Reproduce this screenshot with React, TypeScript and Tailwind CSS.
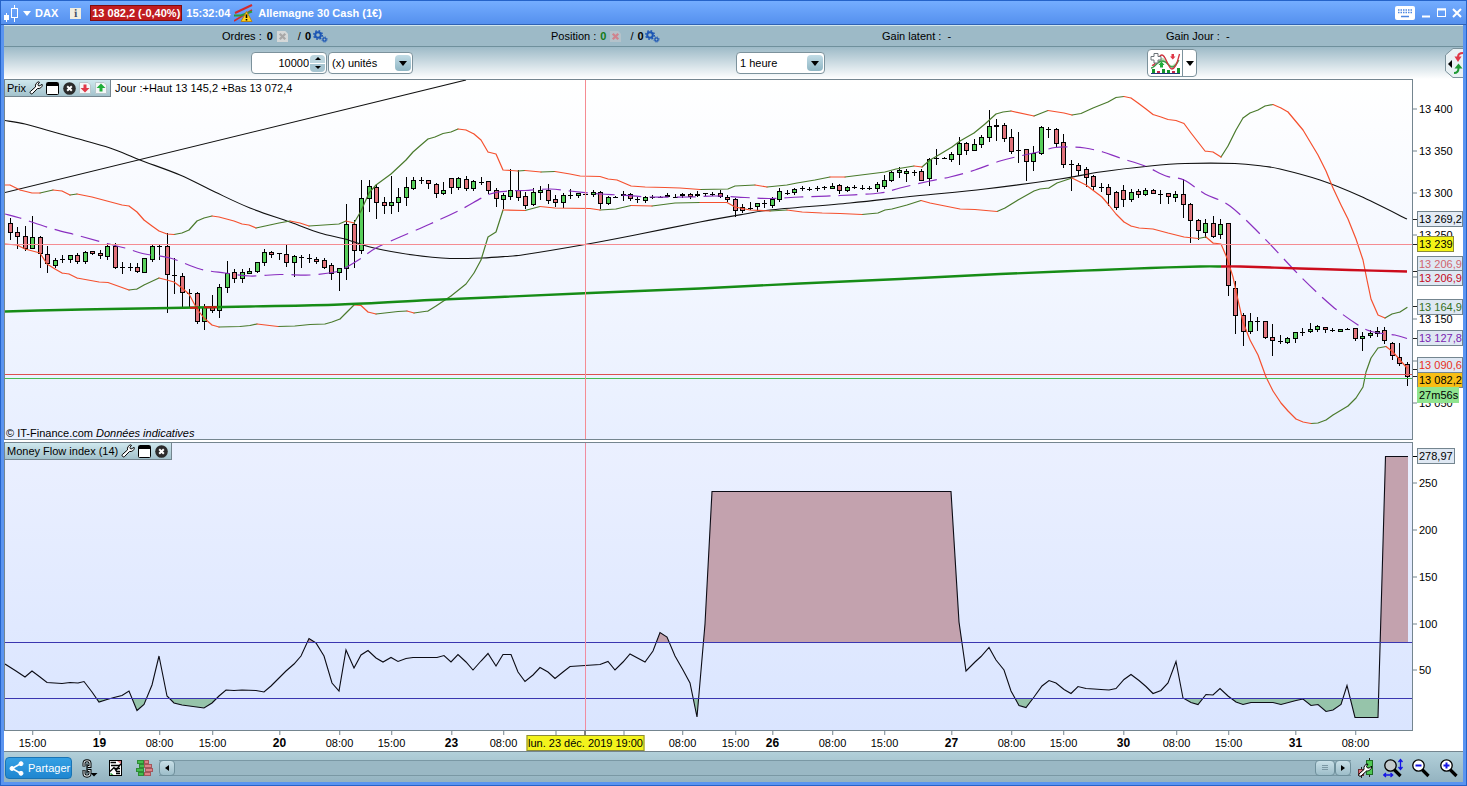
import React from "react";

type Point = [number, number];
type Candle = [number, number, number, number, number];

/* ---------- chart geometry ---------- */

const PRICE = { x: 5, y: 80, w: 1407, h: 359 };
const MFI = { x: 5, y: 443, w: 1407, h: 287 };
const priceToY = (p: number) => 109 + (13400 - p) * 0.84;
const mfiToY = (v: number) => 717 - v * 0.935;
const pct = (v: number) => `${v * 100}%`;
const priceTop = (y: number) => pct((y - 79) / 361);
const mfiTop = (y: number) => pct((y - 442) / 289);
const timeLeft = (x: number) => pct((x + 0.5 - 4) / 1409);

/* high, body top, body bottom, low, rising (1) or falling (0) */
const candles: Candle[] = [
  [218,223,232,239,0],[227,232,236,248,0],[226,236,248,250,0],[216,237,248,248,1],[236,237,253,267,0],[246,254,263,272,0],
  [258,260,265,267,1],[255,259,259,262,0],[255,255,259,262,1],[253,255,261,263,0],[251,252,261,263,1],[251,251,253,254,0],
  [250,253,255,258,0],[243,246,256,259,1],[243,246,267,268,0],[262,267,267,273,0],[263,267,267,270,0],[263,267,271,272,0],
  [258,258,272,272,1],[244,246,259,261,1],[245,246,246,259,0],[233,246,274,312,0],[258,275,275,293,0],[273,276,292,306,0],
  [289,293,293,307,0],[292,293,321,323,0],[304,307,321,329,1],[295,307,310,312,0],[284,287,310,317,1],[261,273,287,292,1],
  [269,272,278,282,0],[269,272,278,282,1],[268,271,273,273,1],[262,262,271,272,1],[249,252,262,265,1],[251,252,254,257,0],
  [253,253,253,259,0],[245,254,262,266,0],[255,256,262,276,1],[255,257,257,267,0],[254,258,258,262,0],[257,259,261,263,0],
  [258,260,267,268,0],[263,265,273,279,0],[268,268,272,290,1],[204,224,268,279,1],[220,224,250,267,0],[180,198,250,253,1],
  [180,186,198,211,1],[184,187,202,218,0],[197,202,205,213,0],[176,202,205,213,1],[188,197,202,211,1],[177,187,197,205,1],
  [177,180,188,189,1],[177,180,180,183,0],[180,180,183,188,0],[183,184,193,197,0],[182,190,193,194,1],[178,178,187,193,0],
  [177,178,187,189,1],[176,179,188,190,0],[180,181,188,190,1],[177,182,182,184,0],[181,181,190,193,0],[188,190,198,206,0],
  [193,195,199,208,1],[169,190,196,199,1],[170,190,197,200,0],[192,196,205,208,0],[188,192,204,205,1],[186,190,192,199,1],
  [184,190,200,203,0],[195,199,202,206,0],[193,195,202,207,1],[189,195,195,198,0],[193,193,195,197,1],[191,194,194,196,0],
  [190,192,194,196,1],[191,192,203,208,0],[196,197,203,204,1],[196,197,197,197,0],[191,194,195,200,1],[193,194,198,200,0],
  [197,199,199,202,0],[196,197,200,202,1],[195,197,197,198,0],[196,197,197,197,0],[193,195,196,196,0],[194,197,197,197,0],
  [193,194,195,197,0],[193,194,196,198,0],[191,194,195,196,0],[193,193,193,195,0],[192,194,194,195,0],[190,193,196,197,0],
  [195,197,199,201,0],[198,199,210,216,0],[204,207,210,212,0],[202,208,208,209,0],[203,203,206,210,1],[200,203,203,207,0],
  [197,199,205,207,1],[188,191,199,201,1],[190,193,193,194,0],[188,189,192,194,1],[186,188,188,190,0],[187,189,189,190,0],
  [186,188,188,190,0],[186,187,187,189,0],[183,186,188,188,1],[184,185,190,193,0],[186,187,190,191,1],[185,187,187,188,0],
  [185,188,188,189,0],[186,188,188,189,0],[182,184,188,191,1],[175,180,186,188,1],[171,172,180,181,1],[167,170,172,177,1],
  [169,171,173,181,1],[170,172,172,175,0],[169,171,180,180,0],[158,159,178,185,1],[149,158,158,164,0],[157,158,158,158,0],
  [152,154,159,161,1],[137,143,154,164,1],[142,143,150,154,0],[139,144,150,150,1],[135,137,144,147,1],[110,126,137,141,1],
  [119,125,126,140,0],[123,125,138,141,0],[129,137,151,153,0],[132,150,150,162,0],[149,149,161,180,0],[146,153,161,170,1],
  [126,127,153,154,1],[127,129,129,137,0],[128,129,143,146,0],[134,142,164,167,0],[160,164,164,190,0],[163,165,170,175,0],
  [167,169,177,186,0],[175,176,186,190,0],[183,187,187,191,0],[184,187,194,205,0],[191,192,207,209,0],[185,190,199,206,0],
  [189,192,199,201,1],[189,191,194,197,0],[188,190,194,195,1],[189,190,193,193,0],[190,194,194,203,0],[193,193,196,203,0],
  [191,194,197,201,1],[179,194,204,217,0],[203,204,220,242,0],[219,220,230,239,0],[219,223,232,237,1],[216,223,236,237,0],
  [219,224,234,238,1],[223,223,285,295,0],[281,288,315,333,0],[313,315,331,345,0],[313,321,331,333,1],[317,321,321,330,0],
  [321,321,337,338,0],[324,337,340,355,0],[335,341,341,343,0],[337,338,342,343,1],[332,332,338,342,1],[328,332,332,335,0],
  [323,329,331,332,1],[325,326,329,331,1],[327,327,329,332,0],[328,330,330,331,0],[329,329,331,331,1],[328,329,329,329,0],
  [328,328,338,340,0],[332,336,338,350,1],[330,333,335,337,1],[327,331,333,336,1],[327,330,340,343,0],[342,343,355,359,0],
  [343,357,363,365,0],[362,364,376,385,0],
];

const upperBand: Point[] = [
  [5,185],[10,185],[20,190],[32,193],[40,193],[53,190],[62,191],[70,195],[77,194],[92,197],[107,201],[122,205],[129,206],[137,212],
  [144,220],[152,226],[159,231],[167,234],[174,234.5],[182,233],[189,230],[197,221],[204,218],[212,216],[219,217],[234,221],[242,224],
  [249,225],[256,228],[279,223],[290,221],[300,223],[309,226],[324,225],[339,224],[346,221],[354,223],[361,211],[369,193],[376,185],
  [391,174],[406,160],[413,152],[421,145],[428,139],[435,137],[443,133.5],[451,132],[458,129],[466,130],[474,134],[481,140],[488,152],
  [496,154],[503,170],[511,170.5],[518,171],[525,170.5],[541,172],[555,171.5],[570,174],[580,176],[600,176.5],[608,179],[617,180],
  [631,186],[645,187],[665,187.5],[680,188],[700,189.5],[728,189],[735,186],[755,185],[767,187],[787,185],[797,183],[815,180],
  [830,177],[845,177],[885,172],[896,169],[914,166],[922,167],[930,160],[937,156],[952,147],[960,141],[974,133],[985,124],[996,114],
  [1003,112],[1011,111],[1034,116],[1048,110.5],[1064,113],[1072,115],[1081,113.5],[1093,108],[1108,102],[1116,97.5],[1124,96.5],
  [1131,98],[1138,103],[1146,109],[1153,114.5],[1161,117],[1168,119.5],[1176,120.5],[1184,123.5],[1191,133],[1198,142],[1205,151],
  [1213,152],[1221,157],[1228,146],[1236,130],[1243,118],[1250,113],[1258,110],[1265,106],[1273,104.5],[1281,108],[1288,112],
  [1303,130],[1318,155],[1326,171],[1333,188],[1341,205],[1348,219],[1356,239],[1363,260],[1367,280],[1371,299],[1378,315],
  [1385,318],[1392,314],[1400,312],[1407,307.5],
];

const lowerBand: Point[] = [
  [5,244],[17,245],[25,249],[40,253],[47,264],[55,269],[62,273],[69,274],[77,278],[99,282],[108,282.5],[129,290],[137,289],[144,285],
  [159,278],[167,280],[174,282],[182,288],[189,294],[197,309],[204,318],[212,325],[219,327],[240,326.5],[250,325.5],[257,324],
  [278,326.5],[295,326],[310,324.5],[325,324],[332,322],[340,319],[347,312],[354,305],[361,305.5],[368,312],[376,314],[398,311.5],
  [407,311],[414,313],[428,311],[436,306],[451,296],[466,284],[474,273],[481,260],[488,237],[496,232],[503,210],[525,210.5],
  [540,206.5],[555,208],[590,208.5],[600,210],[616,209],[631,205.5],[652,206],[675,203],[700,202.5],[727,202.5],[735,207],[750,210],
  [770,211],[787,210],[802,212],[822,213],[840,213.5],[862,214.5],[878,213],[885,210],[892,209],[907,205],[921,200.5],[930,203],
  [945,206],[960,209],[975,209.5],[997,211.5],[1005,208],[1018,200],[1034,191],[1040,189],[1049,188],[1057,183],[1072,178],
  [1080,182],[1086,185],[1094,191],[1102,197],[1108,204],[1116,214],[1124,222],[1131,226],[1139,228],[1153,229],[1168,233],
  [1184,237],[1198,238.5],[1206,237],[1213,243],[1221,244],[1227,258],[1233,277],[1238,300],[1243,322],[1250,340],[1258,355],
  [1266,377],[1273,391],[1281,403],[1288,411],[1296,419],[1303,422],[1311,423.5],[1318,423],[1326,420],[1333,415],[1348,406],
  [1356,398],[1363,387],[1366,372],[1371,358],[1378,348],[1386,346.5],[1393,352],[1400,360],[1407,368],
];

const slowAverage: Point[] = [
  [5,120.5],[25,124],[50,131],[75,138],[110,148],[140,160],[180,175],[215,192],[250,208],[290,222],[320,233],[345,239],[370,247],
  [400,253],[430,257],[450,258.5],[482,258],[505,256.5],[525,254.5],[585,244.5],[640,234],[700,222],[745,214],[770,210],[850,203],
  [915,196],[985,189],[1060,179],[1100,172],[1150,166],[1185,163.5],[1235,163.5],[1262,166],[1280,169],[1320,180],[1360,196],[1407,219],
];

const middleBand: Point[] = [
  [5,214],[20,218],[50,228],[80,236],[105,243],[125,248],[145,254],[170,258],[200,269],[225,273],[250,276],[280,274.5],[310,275],
  [335,272],[345,268],[360,259],[376,248],[400,237],[430,224],[460,210],[490,194],[510,191],[525,190.5],[550,189],[570,191],
  [600,194],[620,195],[650,197],[690,197],[715,196],[745,197.5],[770,198.5],[800,197],[840,195.5],[880,193],[900,188],[930,181],
  [950,177],[975,170],[1000,161],[1020,156],[1040,151.5],[1055,147.5],[1072,147],[1085,148],[1103,152],[1120,158],[1145,166],
  [1166,176],[1184,180],[1205,194],[1230,206],[1265,239],[1300,276],[1332,306],[1358,325],[1370,331],[1385,334],[1395,335],[1407,338.5],
];

const longRising: Point[] = [
  [5,311.5],[60,310],[110,309],[170,308],[250,306.5],[340,304.5],[430,300],[500,297],[590,293],[700,288.5],[800,283.5],[900,279],
  [1000,274],[1060,271.5],[1100,270],[1150,268],[1200,266.5],[1221,266.5],
];
const longFalling: Point[] = [[1221,266.5],[1240,266.5],[1300,268.5],[1350,270],[1407,271.5]];

const moneyFlow: Point[] = [
  [5,664],[16,671],[25,677],[32,671],[40,677],[47,682.5],[62,683.5],[70,682.5],[78,683],[84,681.5],[92,692],[99,702],[107,699.5],
  [114,697.5],[122,695.5],[129,691],[137,710.5],[144,704.5],[152,685],[159,656],[167,696],[174,703],[182,705],[204,708],[212,703],
  [219,696],[226,690],[234,690.5],[242,690],[256,690.5],[264,692],[271,686],[279,678],[286,671],[294,664],[301,656],[309,638.5],
  [316,643],[324,656],[332,683],[339,691],[346,650],[354,668],[361,655],[368,650.5],[376,658],[383,662],[391,657.5],[398,661.5],
  [406,658.5],[413,657.5],[437,657.5],[444,655.5],[451,662],[458,654.5],[466,662],[473,670],[481,661],[488,653.5],[496,666],
  [503,654.5],[511,654.5],[518,672],[525,681.5],[533,675],[540,667.5],[548,672],[555,678.5],[563,672],[570,666.5],[585,665.5],
  [600,664.5],[608,661.5],[615,670],[623,662],[630,654],[645,662],[653,651],[660,632.5],[667,637],[675,656],[683,670],[690,683],
  [697,717],[705,624],[712,491.5],[951,491.5],[959,622],[966,671],[975,662],[981,656.5],[989,647.5],[996,660],[1004,670],
  [1011,691],[1019,705.5],[1026,707.5],[1034,697],[1042,686],[1049,680.5],[1056,683],[1064,689.5],[1071,693.5],[1078,686.5],
  [1086,688.5],[1094,689],[1101,689.5],[1109,690],[1116,688.5],[1124,679.5],[1131,674.5],[1139,680.5],[1146,686.5],[1153,693.5],
  [1161,690.5],[1168,683],[1176,661.5],[1183,698],[1191,702.5],[1198,704.5],[1206,694.5],[1213,695],[1220,688.5],[1228,696],
  [1236,702],[1243,704.5],[1251,702.5],[1273,702.5],[1281,704.5],[1296,700.5],[1303,699],[1311,705.5],[1318,704.5],[1326,711.5],
  [1333,710],[1341,704.5],[1347,685.5],[1355,717.5],[1378,717.5],[1385.5,456.5],[1408,456.5],
];

const line = (pts: Point[]) => pts.map(([x, y], i) => `${i ? "L" : "M"}${x} ${y}`).join("");

/* Catmull-Rom spline through the points */
const curve = (pts: Point[]) => {
  let d = `M${pts[0][0]} ${pts[0][1]}`;
  for (let i = 0; i < pts.length - 1; i++) {
    const a = pts[Math.max(0, i - 1)];
    const b = pts[i];
    const c = pts[i + 1];
    const e = pts[Math.min(pts.length - 1, i + 2)];
    d += `C${b[0] + (c[0] - a[0]) / 6} ${b[1] + (c[1] - a[1]) / 6} ${c[0] - (e[0] - b[0]) / 6} ${c[1] - (e[1] - b[1]) / 6} ${c[0]} ${c[1]}`;
  }
  return d;
};

/* ---------- charts ---------- */

function Band({ points }: { points: Point[] }) {
  const parts = (rising: boolean) =>
    points
      .slice(1)
      .map((p, i) => (p[1] < points[i][1] === rising ? `M${points[i][0]} ${points[i][1]}L${p[0]} ${p[1]}` : ""))
      .join("");
  return (
    <g fill="none" strokeWidth="1.2" strokeLinecap="round">
      <path d={parts(true)} stroke="#4a7a2c" />
      <path d={parts(false)} stroke="#f5502e" />
    </g>
  );
}

function PriceChart() {
  return (
    <svg
      className="block h-full w-full"
      viewBox={`${PRICE.x} ${PRICE.y} ${PRICE.w} ${PRICE.h}`}
      preserveAspectRatio="none"
      role="img"
      aria-label="Prix"
    >
      <g shapeRendering="crispEdges">
        {candles.map(([hi, top, bot, lo, up], i) => {
          const x = Math.round(10 + i * 7.47);
          const flat = bot - top < 2;
          return (
            <g key={i}>
              <rect x={x} y={hi} width="1" height={Math.max(1, lo - hi + 1)} fill="#000" />
              {flat ? (
                <rect x={x - 2} y={top} width="5" height={bot - top + 1} fill="#000" />
              ) : (
                <rect x={x - 1.5} y={top + 0.5} width="4" height={bot - top} fill={up ? "#58cf5a" : "#e0727a"} stroke="#000" />
              )}
            </g>
          );
        })}
      </g>
      <path d="M5 192.5L466 80" stroke="#111" strokeWidth="1.1" fill="none" />
      <path d={curve(slowAverage)} stroke="#111" strokeWidth="1.1" fill="none" />
      <path d={curve(middleBand)} stroke="#8a2fc0" strokeWidth="1.2" strokeDasharray="19 8" strokeDashoffset="2" fill="none" />
      <Band points={upperBand} />
      <Band points={lowerBand} />
      <path d={curve(longRising)} stroke="#168c16" strokeWidth="2.4" fill="none" />
      <path d="M190 307.8H198M204 307.2H217" stroke="#d81414" strokeWidth="2" />
      <path d={curve(longFalling)} stroke="#cc0c1c" strokeWidth="2.4" fill="none" />
      <g shapeRendering="crispEdges">
        <rect x="5" y="244" width="1407" height="1" fill="#f58c92" />
        <rect x="5" y="374" width="1407" height="1" fill="#dd5050" />
        <rect x="5" y="378" width="1407" height="1" fill="#46bb52" />
        <rect x="585" y="80" width="1" height="359" fill="#f58c92" />
      </g>
    </svg>
  );
}

function MoneyFlowChart() {
  const d = line(moneyFlow);
  return (
    <svg
      className="block h-full w-full"
      viewBox={`${MFI.x} ${MFI.y} ${MFI.w} ${MFI.h}`}
      preserveAspectRatio="none"
      role="img"
      aria-label="Money Flow index"
    >
      <defs>
        <clipPath id="overbought">
          <rect x="5" y="443" width="1403" height="199" />
        </clipPath>
        <clipPath id="oversold">
          <rect x="5" y="699" width="1407" height="31" />
        </clipPath>
      </defs>
      <path d={`${d}V642H5Z`} fill="#c3a2ae" clipPath="url(#overbought)" />
      <path d={`${d}V698H5Z`} fill="#96c4aa" clipPath="url(#oversold)" />
      <path d={d} fill="none" stroke="#0b0b14" strokeWidth="1.1" />
      <g shapeRendering="crispEdges">
        <rect x="5" y="642" width="1407" height="1" fill="#3a36b0" />
        <rect x="5" y="698" width="1407" height="1" fill="#3a36b0" />
        <rect x="585" y="443" width="1" height="287" fill="#f08ca0" />
      </g>
    </svg>
  );
}

/* ---------- axes ---------- */

const priceTicks = [13400, 13350, 13300, 13250, 13200, 13150, 13100, 13050];
const priceTags = [
  { at: 13269.2, y: 219, text: "13 269,2", look: "border-[#74858f] bg-[#e3ebf5] text-black" },
  { at: 13239, y: 244, text: "13 239", look: "border-[#8a8a3c] bg-[#f3f316] text-black" },
  { at: 13206.9, y: 264, text: "13 206,9", look: "border-[#74858f] bg-[#dfe8f3] text-[#d0646e]" },
  { at: 13206.9, y: 278, text: "13 206,9", look: "border-[#74858f] bg-[#dfe8f3] text-[#c40a1e]" },
  { at: 13164.9, y: 307, text: "13 164,9", look: "border-[#74858f] bg-[#dfe8f3] text-[#35701c]" },
  { at: 13127.8, y: 338, text: "13 127,8", look: "border-[#74858f] bg-[#dfe8f3] text-[#7a1fb0]" },
  { at: 13090.6, y: 365, text: "13 090,6", look: "border-[#74858f] bg-[#dfe8f3] text-[#e8301c]" },
  { at: 13082.2, y: 380, text: "13 082,2", look: "border-[#74858f] bg-[#f8be14] text-black" },
  { at: 13075, y: 395, text: "27m56s", look: "border-[#8fe48f] bg-[#8fe48f] text-black" },
];

const tickClass = "absolute left-0 flex -translate-y-1/2 items-center gap-[2px] whitespace-nowrap leading-none";

function PriceAxis() {
  return (
    <div className="relative">
      {priceTicks.map((p) => (
        <div key={p} className={tickClass} style={{ top: priceTop(priceToY(p)) }}>
          <span className="h-px w-1 bg-[#74858f]" />
          {p !== 13200 && p !== 13100 && <span>{`13 ${p - 13000 < 100 ? "050" : p - 13000}`}</span>}
        </div>
      ))}
      {priceTags.map((t, i) => (
        <React.Fragment key={i}>
          {i < 8 && <span className="absolute left-0 h-px w-1 bg-[#222]" style={{ top: priceTop(priceToY(t.at)) }} />}
          <span
            className={`absolute left-1 -translate-y-1/2 whitespace-nowrap border pl-px leading-[14px] ${t.look}`}
            style={{ top: priceTop(t.y), right: t.text.length > 6 ? 0 : undefined }}
          >
            {t.text}
          </span>
        </React.Fragment>
      ))}
    </div>
  );
}

function MoneyFlowAxis() {
  return (
    <div className="relative">
      {[250, 200, 150, 100, 50].map((v) => (
        <div key={v} className={tickClass} style={{ top: mfiTop(mfiToY(v)) }}>
          <span className="h-px w-1 bg-[#74858f]" />
          <span>{v}</span>
        </div>
      ))}
      <div className="absolute left-0 flex -translate-y-1/2 items-center" style={{ top: mfiTop(mfiToY(278.97)) }}>
        <span className="h-px w-1 bg-black" />
        <span className="border border-[#74858f] bg-[#dfe8f3] px-px leading-[14px]">278,97</span>
      </div>
    </div>
  );
}

const hours: [number, string][] = [
  [32, "15:00"], [99, "19"], [159, "08:00"], [212, "15:00"], [279, "20"], [339, "08:00"], [391, "15:00"], [451, "23"],
  [503, "08:00"], [555, ""], [623, ""], [682, "08:00"], [735, "15:00"], [772, "26"], [832, "08:00"], [884, "15:00"],
  [951, "27"], [1011, "08:00"], [1063, "15:00"], [1123, "30"], [1176, "08:00"], [1228, "15:00"], [1295, "31"], [1355, "08:00"],
];

function TimeAxis() {
  return (
    <div className="relative bg-white">
      {hours.map(([x, text]) => (
        <div key={x} className="absolute top-0 flex -translate-x-1/2 flex-col items-center" style={{ left: timeLeft(x) }}>
          <span className="h-1 w-px bg-[#74858f]" />
          <span className={`leading-4 ${text.length === 2 ? "text-xs font-bold" : ""}`}>{text}</span>
        </div>
      ))}
      <div className="absolute top-0 flex -translate-x-1/2 flex-col items-center" style={{ left: timeLeft(585) }}>
        <span className="h-1 w-px bg-black" />
        <span className="border border-[#8a8a3c] bg-[#f3f31c] px-px leading-[14px] whitespace-nowrap">lun. 23 déc. 2019 19:00</span>
      </div>
    </div>
  );
}

/* ---------- icons ---------- */

const CandleIcon = () => (
  <svg width="16" height="18" viewBox="0 0 16 18" fill="none" stroke="#fff" shapeRendering="crispEdges">
    <path d="M3.500 9V18" />
    <rect x="1" y="11" width="5" height="5" fill="#fff" stroke="none" />
    <path d="M11.500 1V4M11.500 14V18" />
    <rect x="8.500" y="4.500" width="6" height="9" />
  </svg>
);

const Wrench = () => (
  <svg width="14" height="14" viewBox="0 0 14 14">
    <path
      d="M1.300 10.600L6.500 5.900C6 3.500 7.400 1.300 9.900 .8L10.500 1.300L9 3.300L9.300 4.700L10.900 4.900L12.700 3.100L13.300 3.900C13.200 6.300 10.900 8 8.500 7.500L3.400 12.700C2.400 13.600 .3 11.800 1.300 10.600Z"
      fill="#fff"
      stroke="#000"
      strokeLinejoin="round"
    />
  </svg>
);

const WindowIcon = () => (
  <svg width="13" height="13" viewBox="0 0 13 13">
    <rect x=".5" y=".5" width="12" height="12" rx="1" fill="#fff" stroke="#000" />
    <rect x="1" y="1" width="11" height="3" fill="#000" />
  </svg>
);

const CloseIcon = () => (
  <svg width="13" height="13" viewBox="0 0 13 13">
    <circle cx="6.500" cy="6.500" r="6.300" fill="#2b2b2b" />
    <path d="M4.200 4.200L8.800 8.800M8.800 4.200L4.200 8.800" stroke="#fff" strokeWidth="2" />
  </svg>
);

const ArrowDoc = ({ up }: { up?: boolean }) => (
  <svg width="12" height="12" viewBox="0 0 12 12">
    <path d="M.5 .5H9L11.500 3V11.500H.5Z" fill="#f4f7f8" stroke="#b8c6cc" />
    {up ? (
      <path d="M6 1.500L10.500 6H7.500V9.500H4.500V6H1.500Z" fill="#1fae3a" />
    ) : (
      <path d="M6 10.500L10.500 6H7.500V2.500H4.500V6H1.500Z" fill="#e03848" />
    )}
  </svg>
);

const Gears = () => (
  <svg width="15" height="13" viewBox="0 0 15 13" fill="none" stroke="#1c56b4">
    <circle cx="5" cy="5" r="2.800" strokeWidth="2" />
    <circle cx="5" cy="5" r="4.300" strokeWidth="1.400" strokeDasharray="1.700 1.680" />
    <circle cx="11.500" cy="9.500" r="1.600" strokeWidth="1.300" />
    <circle cx="11.500" cy="9.500" r="2.600" strokeWidth="1" strokeDasharray="1 1.050" />
  </svg>
);

const CancelMark = ({ color, bg }: { color: string; bg: string }) => (
  <svg width="11" height="11" viewBox="0 0 12 12">
    <path d="M0 0H9L12 3V12H0Z" fill={bg} />
    <path d="M3 3L9 9M9 3L3 9" stroke={color} strokeWidth="2.600" />
  </svg>
);

const TrendWarning = () => (
  <svg width="20" height="19" viewBox="0 0 20 19" fill="none">
    <path d="M1 9L18 1" stroke="#d42a2a" strokeWidth="2" />
    <path d="M0 17L18 6" stroke="#d42a2a" strokeWidth="1.500" />
    <path d="M0 11.500H7L18 7.500" stroke="#2f9a3a" strokeWidth="2" />
    <path d="M12.500 7.500L18 17.500H7Z" fill="#ffd21c" stroke="#b5851a" strokeLinejoin="round" />
    <path d="M12.500 10.500V14M12.500 15V16.500" stroke="#000" strokeWidth="1.600" />
  </svg>
);

const Keyboard = () => (
  <svg width="20" height="14" viewBox="0 0 20 14">
    <rect width="20" height="14" rx="2" fill="#fff" />
    <path d="M3 4H17M3 6.500H17" stroke="#4d86e0" strokeWidth="1.500" strokeDasharray="1.500 1" />
    <path d="M6 10.500H14" stroke="#4d86e0" strokeWidth="1.500" />
  </svg>
);

const IndicatorIcon = () => (
  <svg width="31" height="23" viewBox="0 0 31 23" fill="none">
    <path d="M2 14C6 16 8 6 12 6C17 6 20 17 24 12L28 9C25 18 20 16 17 12C13 8 8 11 4 15Z" fill="#b8e0b4" />
    <path d="M1 16C5 16 7 9 12 9C18 9 18 15 22 15C26 15 27 11 29 8" stroke="#3b9c4a" strokeWidth="1.300" />
    <path d="M2 13C5 15 8 3 12 3C16 3 18 17 22 17C26 17 28 8 29.500 2" stroke="#cf3440" strokeWidth="1.300" />
    <path d="M4 1.500H8V4.500H11V8H8V11H4V8H1V4.500H4Z" fill="#fff" stroke="#6c7478" />
    <path d="M21.500 2H24V4.500H25.500L22.800 7.500L20 4.500H21.500Z" fill="#e03848" />
    <path d="M10 15.500H13V13H14.500L11.500 9.500L8.500 13H10Z" fill="#1fae3a" />
    <g shapeRendering="crispEdges">
      <path d="M1 21.500H30" stroke="#223a7c" />
      <path d="M2 17H5V21H2ZM12 17H15V21H12ZM17 18H20V21H17ZM27 16H30V21H27Z" fill="#14952c" />
      <path d="M7 19H10V21H7ZM22 19H25V21H22Z" fill="#c22a4a" />
    </g>
  </svg>
);

const SwapIcon = () => (
  <svg width="18" height="30" viewBox="0 0 18 30" fill="none">
    <path d="M18 .5H8L.5 7V23L8 29.500H18" fill="#e9f1f4" stroke="#7c929c" />
    <path d="M3 16L7 12V20Z" fill="#000" />
    <path d="M18 5C14 5 13 7 13 9" stroke="#e03848" strokeWidth="2" />
    <path d="M9.500 8.500H16.500L13 14Z" fill="#e03848" />
    <path d="M9 25C12.500 25 13.500 23 13.500 20" stroke="#1f9a34" strokeWidth="2" />
    <path d="M9.500 20.500H17.500L13.500 15.500Z" fill="#1f9a34" />
  </svg>
);

const ShareIcon = () => (
  <svg width="15" height="15" viewBox="0 0 15 15" fill="#fff" stroke="#fff">
    <path d="M12 2.500L3 7.500L12 12.500" fill="none" strokeWidth="1.500" />
    <circle cx="12" cy="2.700" r="2" />
    <circle cx="3" cy="7.500" r="2" />
    <circle cx="12" cy="12.300" r="2" />
  </svg>
);

const LinkIcon = () => (
  <svg width="16" height="19" viewBox="0 0 16 19" fill="none">
    <g stroke="#000" strokeWidth="3">
      <path d="M2 7.500V4.500C2 .8 8 .8 8 4.500V7.500H5.500" />
      <path d="M2 11V14.500C2 18 8 18 8 14.500V11.500H5.500" />
    </g>
    <g stroke="#d5dde0" strokeWidth="1.100">
      <path d="M2 7V4.500C2 .8 8 .8 8 4.500V7.500H6" />
      <path d="M2 11.500V14.500C2 18 8 18 8 14.500V11.500H6" />
    </g>
    <path d="M5 4.500V14.500" stroke="#000" strokeWidth="1.200" />
    <path d="M8.500 14H15.500L12 17.500Z" fill="#000" />
  </svg>
);

const NewsIcon = () => (
  <svg width="13" height="16" viewBox="0 0 13 16" fill="none">
    <rect x=".5" y=".5" width="12" height="15" fill="#fff" stroke="#000" />
    <path d="M1.500 2.500H7M2 5.500H10M6 8.500H11M7 11.500H11M7 13.500H11" stroke="#000" strokeWidth="1.300" />
    <path d="M1 11.500L5 7.500L7 10.500L12 3.500" stroke="#000" strokeWidth="1.300" />
    <path d="M1.500 15V12.500L4.500 15Z" fill="#2f9a3a" />
    <path d="M8 1L12 1V4Z" fill="#d87a80" />
  </svg>
);

const DepthIcon = () => (
  <svg width="17" height="16" viewBox="0 0 17 16" shapeRendering="crispEdges">
    <g fill="#45bd4c" stroke="#2f8a36">
      <rect x="1.500" y=".5" width="6" height="3" />
      <rect x="3.500" y="4.500" width="5" height="3" />
      <rect x=".5" y="8.500" width="7" height="3" />
      <rect x="2.500" y="12.500" width="5" height="3" />
    </g>
    <g fill="#dc8388" stroke="#a5565c">
      <rect x="8.500" y=".5" width="4" height="3" />
      <rect x="8.500" y="4.500" width="7" height="3" />
      <rect x="9.500" y="8.500" width="7" height="3" />
      <rect x="8.500" y="12.500" width="6" height="3" />
    </g>
  </svg>
);

const ChartSettingsIcon = () => (
  <svg width="17" height="20" viewBox="0 0 17 20">
    <path d="M4.500 9V20M12.500 0V19" stroke="#222" />
    <rect x="1.500" y="11.500" width="5" height="6" fill="#dd7077" stroke="#6a2a2e" />
    <rect x="9.500" y="2.500" width="6" height="14" fill="#4fc752" stroke="#1d6a22" />
    <path d="M2 16L7 11.500C6.500 8.500 8 6 11 6L9.500 8.500L10.500 10L12.500 10L14.500 8C15 11 12.500 13 9.500 13L4 18C2.500 19 1 17.500 2 16Z" fill="#fff" stroke="#000" />
  </svg>
);

const Magnifier = ({ kind }: { kind: "plus" | "minus" | "fit" }) => (
  <svg width="20" height="20" viewBox="0 0 20 20" fill="none">
    <path d="M11 11.500L17.500 18" stroke="#000" strokeWidth="3.200" />
    <circle cx="7.500" cy="7.500" r="5.700" fill={kind === "fit" ? "#c3cacc" : "#fff"} stroke="#000" strokeWidth="1.300" />
    {kind === "fit" ? (
      <path d="M17.500 2V11M15.500 4L17.500 1.500L19.500 4M15.500 9L17.500 11.500L19.500 9M1 17H9M3 15L.8 17L3 19M7.500 15L9.700 17L7.500 19" stroke="#1414e6" strokeWidth="1.300" />
    ) : (
      <path d={kind === "plus" ? "M4.500 7.500H10.500M7.500 4.500V10.500" : "M4.500 7.500H10.500"} stroke="#1414e6" strokeWidth="2" />
    )}
  </svg>
);

const Caret = () => (
  <svg width="8" height="5" viewBox="0 0 8 5">
    <path d="M0 0H8L4 5Z" fill="currentColor" />
  </svg>
);

/* ---------- controls ---------- */

function Dropdown({ label, options, className }: { label: string; options: string[]; className: string }) {
  return (
    <div className={`relative ${className}`}>
      <select
        aria-label={label}
        className="block h-[22px] w-full appearance-none rounded-sm border border-[#7c929c] bg-white pl-[3px] text-[11px] text-black outline-none"
      >
        {options.map((o) => (
          <option key={o}>{o}</option>
        ))}
      </select>
      <span className="pointer-events-none absolute top-[3px] right-[2px] flex h-4 w-4 items-center justify-center rounded-sm bg-gradient-to-b from-[#c2dce6] to-[#8fb6c4]">
        <Caret />
      </span>
    </div>
  );
}

function PanelTab({ title, children }: { title: string; children?: React.ReactNode }) {
  return (
    <div className="flex h-[17px] items-center border-r border-b border-[#74858f] bg-gradient-to-b from-[#cfe8ee] to-[#a3c2cc] pr-[3px] pl-[2px] whitespace-nowrap">
      <span>{title}</span>
      <div className="ml-[3px] flex items-center gap-[3px]">
        <button aria-label="Configurer"><Wrench /></button>
        <button aria-label="Agrandir"><WindowIcon /></button>
        <button aria-label="Fermer" className="ml-px"><CloseIcon /></button>
        {children}
      </div>
    </div>
  );
}

const scrollButton =
  "flex h-4 items-center justify-center rounded-sm border border-[#6f909c] bg-gradient-to-b from-[#c9e0e8] to-[#9dbdc9]";

export default function App() {
  return (
    <div
      className="flex h-screen min-h-[500px] flex-col border border-[#2563c9] bg-[#5a94f0] text-[11px] text-black"
      style={{ fontFamily: '"Liberation Sans", Arial, sans-serif' }}
    >
      <header className="flex h-[23px] shrink-0 items-center bg-gradient-to-b from-[#74adff] to-[#5590ee] pt-px pr-1 pl-[2px] font-bold text-white">
        <CandleIcon />
        <button className="ml-1 flex items-center gap-1">
          <Caret />
          DAX
        </button>
        <button aria-label="Informations" className="ml-[12px] flex h-[11px] w-[11px] items-center justify-center bg-[#f0ede0] font-serif text-[11px] leading-none text-[#44506a]">
          i
        </button>
        <span className="ml-[9px] border border-[#7c0c10] bg-[#c01c20] px-px leading-[14px]">13 082,2 (-0,40%)</span>
        <span className="ml-1">15:32:04</span>
        <span className="ml-1"><TrendWarning /></span>
        <h1 className="ml-1">Allemagne 30 Cash (1€)</h1>
        <div className="ml-auto flex items-center gap-[6px]">
          <button aria-label="Clavier"><Keyboard /></button>
          <button aria-label="Réduire">
            <svg width="10" height="10" viewBox="0 0 10 10"><path d="M1 8.500H9" stroke="#fff" strokeWidth="2" /></svg>
          </button>
          <button aria-label="Agrandir la fenêtre">
            <svg width="9" height="10" viewBox="0 0 9 10"><rect x=".5" y="1" width="8" height="7.500" fill="none" stroke="#fff" /><path d="M0 1.500H9" stroke="#fff" strokeWidth="2" /></svg>
          </button>
          <button aria-label="Fermer la fenêtre">
            <svg width="10" height="10" viewBox="0 0 10 10"><path d="M1 1L9 9M9 1L1 9" stroke="#fff" strokeWidth="2" /></svg>
          </button>
        </div>
      </header>

      <div className="flex min-h-0 flex-1 flex-col border-t border-t-[#2f62b4] px-[3px] pb-[3px]">
        <div className="grid h-[22px] shrink-0 grid-cols-[218fr_329fr_331fr_284fr_297fr] items-center border-t border-b border-t-[#d4e8ee] border-b-[#6f909c] bg-[#9dbac7]">
          <span />
          <div className="flex items-center">
            <span>Ordres :</span>
            <b className="ml-[5px]">0</b>
            <span className="ml-1"><CancelMark color="#a8a8a8" bg="#d5d8d8" /></span>
            <span className="ml-[10px]">/</span>
            <b className="ml-1">0</b>
            <button aria-label="Réglages des ordres" className="ml-[2px]"><Gears /></button>
          </div>
          <div className="flex items-center">
            <span>Position :</span>
            <b className="ml-1 text-[#127a18]">0</b>
            <span className="ml-1"><CancelMark color="#d0848e" bg="#b4c2ca" /></span>
            <span className="ml-[9px]">/</span>
            <b className="ml-1">0</b>
            <button aria-label="Réglages de la position" className="ml-px"><Gears /></button>
          </div>
          <span>Gain latent :&nbsp; -</span>
          <span>Gain Jour :&nbsp; -</span>
        </div>

        <div className="grid h-8 shrink-0 grid-cols-[247fr_485fr_411fr_316fr] items-center bg-gradient-to-b from-[#9dbac7] to-white">
          <span />
          <div className="flex items-center gap-px">
            <div className="flex h-[22px] w-[76px] items-center rounded-sm border border-[#7c929c] bg-white pr-px">
              <input aria-label="Quantité" defaultValue="10000" className="w-full min-w-0 bg-transparent text-right outline-none" />
              <div className="ml-px flex flex-col gap-px">
                <button aria-label="Augmenter" className="flex h-2 w-[15px] items-center justify-center rounded-t-sm bg-[#bcd5de]">
                  <svg width="6" height="3" viewBox="0 0 6 3"><path d="M0 3H6L3 0Z" /></svg>
                </button>
                <button aria-label="Diminuer" className="flex h-2 w-[15px] items-center justify-center rounded-b-sm bg-[#a6c5d1]">
                  <svg width="6" height="3" viewBox="0 0 6 3"><path d="M0 0H6L3 3Z" /></svg>
                </button>
              </div>
            </div>
            <Dropdown label="Unité" options={["(x) unités"]} className="w-[85px]" />
          </div>
          <Dropdown label="Période" options={["1 heure"]} className="w-[89px]" />
          <div className="flex items-center justify-between">
            <div className="flex h-7 items-stretch overflow-hidden rounded-sm border border-[#7c929c] bg-white">
              <button aria-label="Indicateurs" className="flex w-[34px] items-center justify-center"><IndicatorIcon /></button>
              <button aria-label="Liste des indicateurs" className="flex w-[14px] items-center justify-center border-l border-[#7c929c]"><Caret /></button>
            </div>
            <button aria-label="Achat et vente"><SwapIcon /></button>
          </div>
        </div>

        <main className="grid min-h-0 flex-1 grid-cols-[minmax(0,1fr)_50px] grid-rows-[minmax(0,361fr)_2px_minmax(0,289fr)_20px] bg-white">
          <section className="relative min-h-0 overflow-hidden border border-[#74858f] bg-gradient-to-b from-white to-[#e8efff]">
            <PriceChart />
            <div className="absolute top-0 left-0 flex items-center gap-1">
              <PanelTab title="Prix">
                <button aria-label="Vendre"><ArrowDoc /></button>
                <button aria-label="Acheter" className="ml-px"><ArrowDoc up /></button>
              </PanelTab>
              <span>Jour :+Haut 13 145,2 +Bas 13 072,4</span>
            </div>
            <p className="absolute bottom-0 left-px leading-3">
              © IT-Finance.com <em>Données indicatives</em>
            </p>
          </section>
          <PriceAxis />
          <div className="col-span-2" />
          <section className="relative min-h-0 overflow-hidden border border-[#74858f] bg-gradient-to-b from-[#ebf0ff] to-[#dae5ff]">
            <MoneyFlowChart />
            <div className="absolute top-0 left-0">
              <PanelTab title="Money Flow index (14)" />
            </div>
          </section>
          <MoneyFlowAxis />
          <TimeAxis />
          <div />
        </main>

        <footer className="flex h-[31px] shrink-0 items-center border-t border-[#74858f] bg-gradient-to-b from-[#b2d0da] to-[#94b3c0] pt-[2px] pr-1 pl-px">
          <button className="flex h-[22px] w-[67px] shrink-0 items-center gap-1 rounded-sm border border-[#1873b4] bg-gradient-to-b from-[#34a0e4] to-[#1f86d0] pl-[3px] text-white">
            <ShareIcon />
            Partager
          </button>
          <button aria-label="Lier" className="ml-[10px]"><LinkIcon /></button>
          <button aria-label="Actualités" className="ml-[11px]"><NewsIcon /></button>
          <button aria-label="Carnet" className="ml-[14px]"><DepthIcon /></button>
          <div className="ml-[6px] flex h-4 min-w-0 flex-1 items-center border-y border-[#7a98a4] bg-[#9ab8c4]">
            <button aria-label="Défiler à gauche" className={`${scrollButton} w-4`}>
              <svg width="4" height="6" viewBox="0 0 4 6"><path d="M4 0V6L0 3Z" /></svg>
            </button>
            <button aria-label="Position du défilement" className={`${scrollButton} ml-auto w-5`}>
              <svg width="6" height="6" viewBox="0 0 6 6"><path d="M0 .5H6M0 2.500H6M0 4.500H6" stroke="#7c98a4" /></svg>
            </button>
            <button aria-label="Défiler à droite" className={`${scrollButton} w-4`}>
              <svg width="4" height="6" viewBox="0 0 4 6"><path d="M0 0V6L4 3Z" /></svg>
            </button>
          </div>
          <button aria-label="Réglages du graphique" className="ml-[6px]"><ChartSettingsIcon /></button>
          <button aria-label="Ajuster le zoom" className="ml-[9px]"><Magnifier kind="fit" /></button>
          <button aria-label="Zoom arrière" className="ml-2"><Magnifier kind="minus" /></button>
          <button aria-label="Zoom avant" className="ml-2"><Magnifier kind="plus" /></button>
        </footer>
      </div>
    </div>
  );
}
